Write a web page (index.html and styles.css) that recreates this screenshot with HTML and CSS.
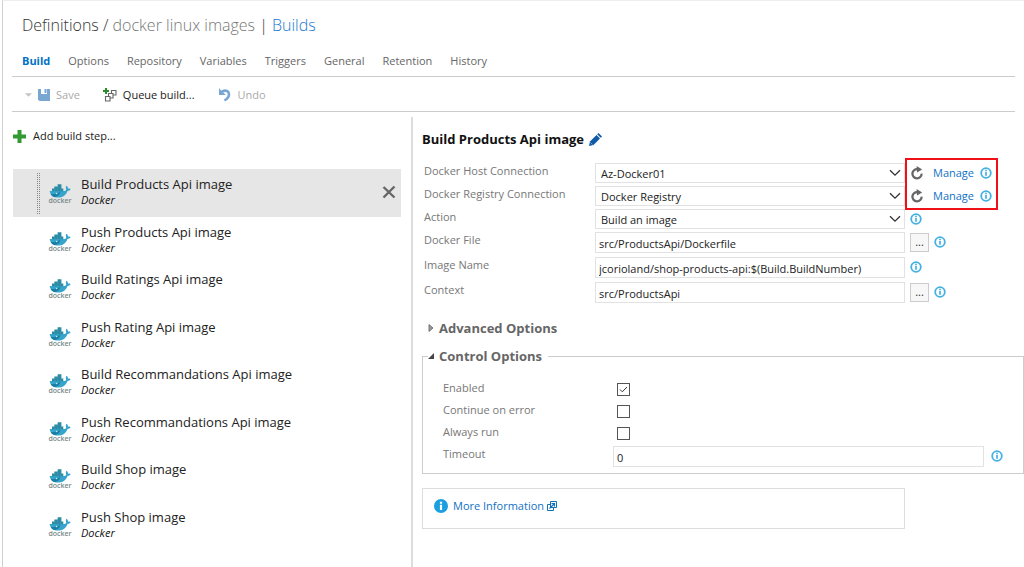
FILE: index.html
```html
<!DOCTYPE html>
<html lang="en">
<head>
<meta charset="utf-8">
<title>docker linux images - Builds</title>
<link rel="stylesheet" href="styles.css">
</head>
<body>
<svg class="defs" aria-hidden="true">
  <symbol id="info" viewBox="0 0 12 12"><circle cx="6" cy="6" r="4.800" fill="#fff" stroke="#45b1e3" stroke-width="1.800"/><path d="M6 5v3.800M6 2.800v1.400" stroke="#45b1e3" stroke-width="1.700"/></symbol>
  <symbol id="chevron" viewBox="0 0 12 8"><path d="M1 1.200l5 5 5-5" fill="none" stroke="#333" stroke-width="1.300"/></symbol>
  <symbol id="refresh" viewBox="0 0 14 14"><path d="M7.800 3.200A4.600 4.600 0 1 0 11.600 7.600" fill="none" stroke="#666" stroke-width="2.300"/><path d="M6.600 0l5.600 3.400-5.200 3z" fill="#666"/></symbol>
  <symbol id="docker" viewBox="0 0 24 17">
    <path d="M1 9.500h16.300c1.200-.2 1.500-1.300 1-2.800-.3-1.100 0-2 .7-2.700 1 .8 1.500 1.800 1.500 2.900 1 0 2 .1 2.800.6-.5 1.400-1.700 2-3.300 2C18.500 14 14.700 16.600 9.500 16.600 4.800 16.600 1.800 14 1 9.500z" fill="#35a5cc"/>
    <path d="M2 12.500c4.500.6 8-.2 10.500-2.500-.5 3.500-3 5.500-6.500 6-2-.7-3.400-2-4-3.500z" fill="#1b7da3"/>
    <path d="M3.500 7h12v2.700h-12zM6 4.700h7.500V7H6zM9.500 2.500h4v2.300h-4z" fill="#2b8ba5"/>
    <path d="M6.500 7v2.500M9.500 4.700v4.800M12.500 7v2.500" stroke="#58a9bd" stroke-width=".4"/>
    <circle cx="8.500" cy="12.200" r=".7" fill="#dff3f9"/>
  </symbol>
</svg>
<div class="page">
  <header class="header">
    <h1 class="title"><span class="title-root">Definitions /</span> docker linux images <span class="title-bar">|</span> <a href="#builds">Builds</a></h1>
    <nav class="tabs">
      <a class="tab tab-active" href="#build">Build</a>
      <a class="tab" href="#options">Options</a>
      <a class="tab" href="#repository">Repository</a>
      <a class="tab" href="#variables">Variables</a>
      <a class="tab" href="#triggers">Triggers</a>
      <a class="tab" href="#general">General</a>
      <a class="tab" href="#retention">Retention</a>
      <a class="tab" href="#history">History</a>
    </nav>
    <div class="toolbar">
      <button class="tool tool-off" type="button" disabled><svg class="caret" viewBox="0 0 8 4"><path d="M0 0h8L4 4z" fill="#c4c4c4"/></svg><svg class="icon-save" viewBox="0 0 12 12"><path d="M0 0h12v12H1.500L0 10.500z" fill="#7aa7d2"/><path d="M3 0h6v5H3z" fill="#fff"/><path d="M6.500 0h2v4h-2z" fill="#7aa7d2"/></svg>Save</button>
      <button class="tool" type="button"><svg class="icon-queue" viewBox="0 0 14 14"><g fill="#fff" stroke="#666" stroke-width="1.100"><path d="M8.500 2.500h4.500v4.500H8.500z"/><path d="M5.500 5.500h4.500v4.500H5.500z"/><path d="M2.500 8.500h4.500v4.500H2.500z"/></g><path d="M3 0v6M0 3h6" stroke="#2d8a2d" stroke-width="2"/></svg>Queue build...</button>
      <button class="tool tool-off" type="button" disabled><svg class="icon-undo" viewBox="0 0 14 14"><path d="M3 4.500C6 1.500 11 2 11 6.500c0 3-2 4.500-4.500 6" fill="none" stroke="#7aa7d2" stroke-width="2.600"/><path d="M1 0v7h7L5.500 4.800 3 2.500z" fill="#7aa7d2"/></svg>Undo</button>
    </div>
  </header>
  <main class="main">
    <section class="steps">
      <button class="add" type="button"><svg class="icon-add" viewBox="0 0 13 13"><path d="M4.500 0h4v4.500H13v4H8.500V13h-4V8.500H0v-4h4.500z" fill="#339933"/></svg>Add build step...</button>
      <ul class="list">
        <li class="step step-active"><span class="grip"></span><span class="logo"><svg><use href="#docker"/></svg><b>docker</b></span><span class="step-text"><span class="step-name">Build Products Api image</span><i>Docker</i></span><button class="remove" type="button" aria-label="Remove"><svg viewBox="0 0 14 14"><path d="M1.500 2l11 10.500M12.500 1.500L1.500 12.500" stroke="#666" stroke-width="2.400"/></svg></button></li>
        <li class="step"><span class="logo"><svg><use href="#docker"/></svg><b>docker</b></span><span class="step-text"><span class="step-name">Push Products Api image</span><i>Docker</i></span></li>
        <li class="step"><span class="logo"><svg><use href="#docker"/></svg><b>docker</b></span><span class="step-text"><span class="step-name">Build Ratings Api image</span><i>Docker</i></span></li>
        <li class="step"><span class="logo"><svg><use href="#docker"/></svg><b>docker</b></span><span class="step-text"><span class="step-name">Push Rating Api image</span><i>Docker</i></span></li>
        <li class="step"><span class="logo"><svg><use href="#docker"/></svg><b>docker</b></span><span class="step-text"><span class="step-name">Build Recommandations Api image</span><i>Docker</i></span></li>
        <li class="step"><span class="logo"><svg><use href="#docker"/></svg><b>docker</b></span><span class="step-text"><span class="step-name">Push Recommandations Api image</span><i>Docker</i></span></li>
        <li class="step"><span class="logo"><svg><use href="#docker"/></svg><b>docker</b></span><span class="step-text"><span class="step-name">Build Shop image</span><i>Docker</i></span></li>
        <li class="step"><span class="logo"><svg><use href="#docker"/></svg><b>docker</b></span><span class="step-text"><span class="step-name">Push Shop image</span><i>Docker</i></span></li>
      </ul>
    </section>
    <section class="details">
      <h2 class="heading">Build Products Api image <svg class="icon-edit" viewBox="0 0 13 13"><path d="M0 13l1-4.500L7.500 2 11 5.500 4.500 12z" fill="#0f5ba7"/><path d="M8.200 1.300L9.500 0l3.500 3.500-1.300 1.300z" fill="#0f5ba7"/><path d="M1.500 9.500l2 2" stroke="#8db9de" stroke-width=".7"/></svg></h2>
      <form class="form">
        <div class="row"><label for="host">Docker Host Connection</label><span class="pick"><select id="host"><option>Az-Docker01</option></select><svg><use href="#chevron"/></svg></span><span class="extra"><svg class="refresh"><use href="#refresh"/></svg><a class="manage" href="#manage-host">Manage</a><svg class="info"><use href="#info"/></svg></span></div>
        <div class="row"><label for="registry">Docker Registry Connection</label><span class="pick"><select id="registry"><option>Docker Registry</option></select><svg><use href="#chevron"/></svg></span><span class="extra"><svg class="refresh"><use href="#refresh"/></svg><a class="manage" href="#manage-registry">Manage</a><svg class="info"><use href="#info"/></svg></span></div>
        <div class="row"><label for="action">Action</label><span class="pick"><select id="action"><option>Build an image</option></select><svg><use href="#chevron"/></svg></span><span class="extra"><svg class="info"><use href="#info"/></svg></span></div>
        <div class="row row-tall"><label for="file">Docker File</label><input class="text" id="file" type="text" value="src/ProductsApi/Dockerfile"><span class="extra"><button class="browse" type="button">...</button><svg class="info"><use href="#info"/></svg></span></div>
        <div class="row row-tall"><label for="image">Image Name</label><input class="text" id="image" type="text" value="jcorioland/shop-products-api:$(Build.BuildNumber)"><span class="extra"><svg class="info"><use href="#info"/></svg></span></div>
        <div class="row row-tall"><label for="context">Context</label><input class="text" id="context" type="text" value="src/ProductsApi"><span class="extra"><button class="browse" type="button">...</button><svg class="info"><use href="#info"/></svg></span></div>
        <span class="highlight"></span>
      </form>
      <h3 class="advanced"><svg class="arrow" viewBox="0 0 6 8"><path d="M1 .5v7L5 4z" fill="#999" stroke="#777"/></svg>Advanced Options</h3>
      <fieldset class="control">
        <legend><svg class="arrow" viewBox="0 0 6 8"><path d="M6 1v6H0z" fill="#444"/></svg>Control Options</legend>
        <div class="option"><label for="enabled">Enabled</label><input class="check" id="enabled" type="checkbox" checked></div>
        <div class="option"><label for="continue">Continue on error</label><input class="check" id="continue" type="checkbox"></div>
        <div class="option"><label for="always">Always run</label><input class="check" id="always" type="checkbox"></div>
        <div class="option"><label for="timeout">Timeout</label><input class="text" id="timeout" type="text" value="0"><svg class="info"><use href="#info"/></svg></div>
      </fieldset>
      <div class="more"><svg class="icon-more" viewBox="0 0 14 14"><circle cx="7" cy="7" r="7" fill="#1c9fe0"/><path d="M7 5.800v5.200M7 2.800v2" stroke="#fff" stroke-width="2.200"/></svg><a href="#more">More Information <svg class="icon-out" viewBox="0 0 10 10"><path d="M3.500.5h6v6h-6zM3 3.500H.5v6h6V7" fill="none" stroke="#1172b8"/><path d="M2.500 7.500L7 3M4.500 2.500h3v3" fill="none" stroke="#1172b8" stroke-width="1.200"/></svg></a></div>
    </section>
  </main>
</div>
</body>
</html>
```
FILE: styles.css
```css
* { box-sizing: border-box; }
body {
  margin: 0;
  background: #fff;
  color: #222;
  font: 11px/16px "Open Sans", "Noto Sans", sans-serif;
}
.defs { position: absolute; width: 0; height: 0; }
svg { flex: none; display: block; }
a { color: #1172c4; text-decoration: none; }
button, input, select { font: inherit; color: inherit; margin: 0; }
button { padding: 0; border: 0; background: none; }
.page {
  display: flex;
  flex-direction: column;
  min-height: 100vh;
  margin-left: 2px;
  border-left: 1px solid #d0d0d0;
  border-top: 1px solid #eee;
}
.header { margin: 0 9px; }
.title {
  margin: 0;
  padding: 12px 10px 0;
  font-size: 16px;
  line-height: 24px;
  font-weight: 300;
  color: #777;
}
.title-root, .title-bar { color: #333; }
.title a { color: #1a7ad4; }
.tabs {
  display: flex;
  gap: 18px;
  padding: 16px 10px 0;
  height: 40px;
  border-bottom: 1px solid #ccc;
}
.tab { color: #666; }
.tab-active { color: #0071c5; font-weight: 700; }
.toolbar {
  display: flex;
  gap: 23px;
  height: 35px;
  padding: 2px 0 0 13px;
  border-bottom: 1px solid #ccc;
}
.tool { display: flex; align-items: center; gap: 6px; }
.tool-off { color: #aaa; }
.caret { width: 7px; height: 4px; }
.icon-save { width: 12px; height: 12px; }
.icon-queue, .icon-undo { width: 14px; height: 14px; }
.main { display: flex; flex: 1; }
.steps { width: 398px; margin-right: 10px; padding: 16px 0 0 10px; }
.add { display: flex; align-items: center; gap: 7px; }
.icon-add { width: 13px; height: 13px; }
.list {
  display: grid;
  grid-auto-rows: 1fr;
  height: 380px;
  margin: 25px 0 0;
  padding: 0;
  list-style: none;
}
.step { display: flex; padding: 7px 5px 0 35px; position: relative; }
.step-active { background: #e6e6e6; }
.grip {
  position: absolute;
  left: 23px;
  top: 3px;
  bottom: 3px;
  width: 5px;
  background: conic-gradient(#e6e6e6 25%, transparent 0 50%, #e6e6e6 0) 0 0 / 2px 2px #888;
}
.logo { width: 24px; margin: 6px 9px 0 0; text-align: center; }
.logo svg { width: 24px; height: 16px; }
.logo b { display: block; font-size: 7px; line-height: 6px; font-weight: 600; color: #788; }
.step-text { flex: 1; }
.step-name { display: block; font-size: 13px; }
.step i { color: #111; }
.remove { align-self: flex-start; margin-top: 9px; }
.remove svg { width: 14px; height: 14px; }
.details {
  flex: 1;
  min-width: 0;
  margin-top: 5px;
  padding: 13px 0 0 9px;
  border-left: 2px solid #ddd;
}
.heading {
  display: flex;
  align-items: center;
  gap: 5px;
  margin: 0;
  font-size: 13px;
  line-height: 18px;
  color: #111;
}
.icon-edit { width: 13px; height: 13px; }
.form { position: relative; margin-top: 15px; }
.row {
  display: grid;
  grid-template-columns: 171px 1fr 119px;
  height: 23px;
  padding-left: 2px;
  align-items: start;
}
.row-tall { height: 25px; }
label { color: #777; }
.pick { position: relative; display: block; }
.pick select {
  display: block;
  width: 100%;
  height: 20px;
  padding: 1px 20px 0 5px;
  border: 1px solid #e2e2e2;
  border-radius: 0;
  background: #fff;
  appearance: none;
}
.pick svg { position: absolute; right: 4px; top: 6px; width: 12px; height: 8px; pointer-events: none; }
.text { width: 100%; height: 21px; padding: 1px 3px 0; border: 1px solid #e2e2e2; background: #fff; }
.extra { display: flex; align-items: center; height: 20px; padding-left: 5px; gap: 6px; }
.info { width: 12px; height: 12px; }
.refresh { width: 14px; height: 14px; }
.manage { margin-left: 3px; }
.browse { width: 19px; height: 19px; margin-right: -1px; border: 1px solid #ccc; background: #f7f7f7; color: #333; }
.highlight {
  position: absolute;
  top: -5px;
  right: 26px;
  width: 93px;
  height: 52px;
  border: 2px solid #f01018;
  pointer-events: none;
}
.advanced, .control legend {
  display: flex;
  align-items: center;
  gap: 5px;
  margin: 0;
  padding: 0 6px;
  font-size: 13px;
  line-height: 18px;
  font-weight: 700;
  color: #666;
}
.advanced { margin-top: 12px; }
.control {
  margin: 10px 0 0;
  padding: 15px 20px 5px;
  min-width: 0;
  border: 1px solid #ccc;
}
.control legend { margin-left: -15px; padding-left: 0; }
.arrow { width: 6px; height: 8px; }
.option { display: grid; grid-template-columns: 170px 1fr 19px; height: 22px; }
.option .info { margin: 4px 0 0 7px; }
.check {
  width: 13px;
  height: 13px;
  margin: 3px 0 0 4px;
  border: 1px solid #555;
  background: #fff;
  appearance: none;
}
.check:checked {
  background: url("data:image/svg+xml,%3Csvg xmlns='http://www.w3.org/2000/svg' viewBox='0 0 11 11'%3E%3Cpath d='M2 5.500l2.300 2.300L9 3' fill='none' stroke='%23333'/%3E%3C/svg%3E");
}
.more {
  display: flex;
  gap: 5px;
  height: 41px;
  margin: 14px 119px 0 0;
  padding: 9px 11px;
  border: 1px solid #ddd;
}
.icon-more { width: 14px; height: 14px; margin-top: 1px; }
.more a { display: flex; gap: 3px; height: 16px; align-items: center; }
.icon-out { width: 10px; height: 10px; }
```
